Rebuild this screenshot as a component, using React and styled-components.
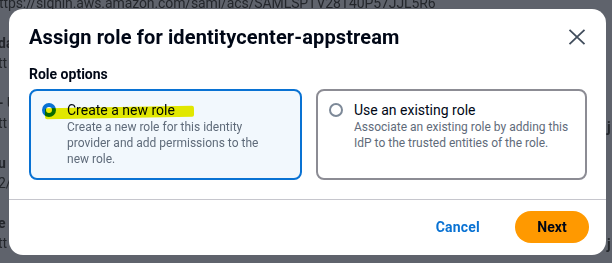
import React from 'react'
import styled, { createGlobalStyle } from 'styled-components'

const GlobalStyle = createGlobalStyle`
  html, body { margin: 0; padding: 0; }
  body {
    width: 612px;
    height: 263px;
    overflow: hidden;
    font-family: Roboto, "Liberation Sans", Arial, sans-serif;
    background: #5f636c;
  }
`

const backLines = [
  { text: '' },
  { text: 'da', bold: true },
  { text: 'tt' },
  { text: '' },
  { text: '- U', bold: true },
  { text: 'tt' },
  { text: '' },
  { text: 'u', bold: true },
  { text: '2/' },
  { text: '' },
  { text: 'e', bold: true },
  { text: 'tt' },
]

export default function App() {
  return (
    <>
      <GlobalStyle />
      <Page>
        <Url>ttps://signin.aws.amazon.com/saml/acs/SAMLSPTV28T40P57JJL5R6</Url>
        {backLines.map((l, i) => (
          <BackLine key={i} bold={l.bold}>{l.text}</BackLine>
        ))}
        <RightMark top={119}>j</RightMark>
        <RightMark top={236}>j</RightMark>
        <Modal>
          <Header>
            <Title>Assign role for identitycenter-appstream</Title>
            <Close aria-label="Close">
              <svg width="18" height="16" viewBox="0 0 18 16">
                <path d="M1.5 0.8 L16.5 15.2 M16.5 0.8 L1.5 15.2" stroke="#414d5c" strokeWidth="1.8" fill="none" />
              </svg>
            </Close>
          </Header>
          <Body>
            <Label>Role options</Label>
            <Cards>
              <Card selected>
                <Radio selected />
                <CardText>
                  <CardTitle>Create a new role</CardTitle>
                  <CardDesc>Create a new role for this identity provider and add permissions to the new role.</CardDesc>
                </CardText>
                <Highlight />
              </Card>
              <Card>
                <Radio />
                <CardText>
                  <CardTitle>Use an existing role</CardTitle>
                  <CardDesc>Associate an existing role by adding this IdP to the trusted entities of the role.</CardDesc>
                </CardText>
              </Card>
            </Cards>
          </Body>
          <Footer>
            <LinkButton>Cancel</LinkButton>
            <PrimaryButton>Next</PrimaryButton>
          </Footer>
        </Modal>
      </Page>
    </>
  )
}

const Page = styled.div`
  position: relative;
  width: 612px;
  height: 263px;
  overflow: hidden;
  color: #23262b;
  font-size: 14px;
`

const Url = styled.div`
  margin: -7px 0 0 -1px;
  height: 20px;
  line-height: 20px;
  font-size: 14px;
  letter-spacing: -0.1px;
`

const BackLine = styled.div`
  margin-left: -2px;
  height: 20px;
  line-height: 20px;
  font-weight: ${p => (p.bold ? 700 : 400)};
`

const RightMark = styled.div`
  position: absolute;
  left: 607px;
  top: ${p => p.top}px;
  font-weight: 700;
`

const Modal = styled.div`
  position: absolute;
  left: 9px;
  top: 9px;
  width: 597px;
  height: 246px;
  background: #ffffff;
  border-radius: 14px;
  display: flex;
  flex-direction: column;
  color: #000716;
`

const Header = styled.div`
  display: flex;
  align-items: center;
  justify-content: space-between;
  padding: 15px 20px 0 20px;
  height: 26px;
`

const Title = styled.h2`
  margin: 0;
  font-size: 20px;
  font-weight: 700;
  letter-spacing: 0.12px;
`

const Close = styled.div`
  display: flex;
  width: 18px;
  height: 16px;
`

const Body = styled.div`
  padding: 15px 19px 0 20px;
`

const Label = styled.div`
  font-size: 14px;
  font-weight: 700;
  line-height: 18px;
  margin-bottom: 6px;
`

const Cards = styled.div`
  display: grid;
  grid-template-columns: 273px 271px;
  gap: 14px;
`

const Card = styled.div`
  position: relative;
  display: flex;
  gap: 11px;
  height: 91px;
  box-sizing: border-box;
  padding: 10px 10px 10px 11px;
  border: 2px solid ${p => (p.selected ? '#0972d3' : '#8c8c94')};
  border-radius: 8px;
  background: ${p => (p.selected ? '#f2f8fd' : '#ffffff')};
`

const Radio = styled.span`
  flex: none;
  box-sizing: border-box;
  width: 14px;
  height: 14px;
  margin-top: 2px;
  border-radius: 50%;
  border: ${p => (p.selected ? '4px solid #0972d3' : '2px solid #7d8998')};
  background: #ffffff;
`

const CardText = styled.div`
  display: flex;
  flex-direction: column;
  max-width: 216px;
`

const CardTitle = styled.div`
  font-size: 14px;
  line-height: 18px;
  color: #000716;
`

const CardDesc = styled.div`
  font-size: 12px;
  line-height: 16px;
  color: #5f6b7a;
`

const Highlight = styled.span`
  position: absolute;
  left: 14px;
  top: 16px;
  width: 149px;
  height: 11px;
  background: #eeee00;
  mix-blend-mode: multiply;
  border-radius: 2px;
  transform: rotate(-0.9deg);
`

const Footer = styled.div`
  margin-top: auto;
  border-top: 1px solid #c6c6cd;
  height: 56px;
  display: flex;
  align-items: center;
  justify-content: flex-end;
  gap: 35px;
  padding: 0 17px 2px 0;
  box-sizing: border-box;
`

const LinkButton = styled.span`
  font-size: 14px;
  font-weight: 700;
  color: #0972d3;
  letter-spacing: 0.2px;
`

const PrimaryButton = styled.span`
  display: flex;
  align-items: center;
  justify-content: center;
  width: 74px;
  height: 32px;
  border-radius: 16px;
  background: #ff9900;
  font-size: 14px;
  font-weight: 700;
  color: #000716;
`
